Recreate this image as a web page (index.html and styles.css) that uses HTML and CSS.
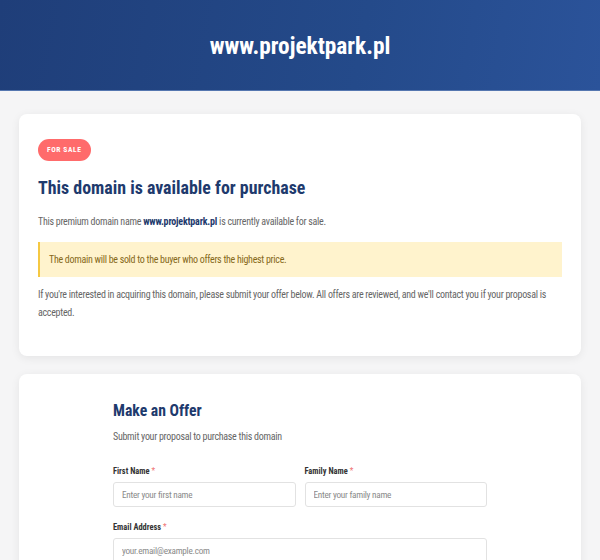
FILE: index.html
```html
<!DOCTYPE html>
<html lang="en">
<head>
<meta charset="utf-8">
<title>www.projektpark.pl - Domain for sale</title>
<link rel="stylesheet" href="styles.css">
</head>
<body>
<header class="site-header">
  <h1 class="site-title">www.projektpark.pl</h1>
</header>

<main class="page">
  <section class="card intro">
    <span class="badge">For Sale</span>
    <h2 class="intro-title">This domain is available for purchase</h2>
    <p class="text lead">This premium domain name <strong>www.projektpark.pl</strong> is currently available for sale.</p>
    <div class="notice">The domain will be sold to the buyer who offers the highest price.</div>
    <p class="text">If you're interested in acquiring this domain, please submit your offer below. All offers are reviewed, and we'll contact you if your proposal is accepted.</p>
  </section>

  <section class="card offer">
    <form class="offer-form">
      <h2 class="offer-title">Make an Offer</h2>
      <p class="text offer-sub">Submit your proposal to purchase this domain</p>

      <div class="row">
        <div class="field">
          <label class="label" for="first">First Name <span class="req">*</span></label>
          <input class="input" id="first" type="text" placeholder="Enter your first name">
        </div>
        <div class="field">
          <label class="label" for="family">Family Name <span class="req">*</span></label>
          <input class="input" id="family" type="text" placeholder="Enter your family name">
        </div>
      </div>

      <div class="field">
        <label class="label" for="email">Email Address <span class="req">*</span></label>
        <input class="input" id="email" type="email" placeholder="your.email@example.com">
      </div>
    </form>
  </section>
</main>
</body>
</html>
```

FILE: styles.css
```css
* {
  box-sizing: border-box;
}

body {
  margin: 0;
  background: #f5f5f6;
  font-family: "Roboto Condensed", Roboto, "Liberation Sans", sans-serif;
  font-stretch: condensed;
  color: #666;
}

/* Top banner */
.site-header {
  height: 91px;
  padding-top: 2px;
  display: flex;
  align-items: center;
  justify-content: center;
  background: linear-gradient(100deg, #1f3e79 0%, #244a8a 60%, #2b539a 100%);
  border-bottom: 1px solid #5577b0;
}

.site-title {
  margin: 0;
  color: #fff;
  font-size: 23.3px;
  font-weight: 700;
  line-height: 28px;
}

/* Content column */
.page {
  display: flex;
  flex-direction: column;
  gap: 18px;
  padding: 23px 19px 40px;
}

.card {
  background: #fff;
  border-radius: 8px;
  box-shadow: 0 2px 10px rgba(0, 0, 0, 0.07);
}

.intro {
  padding: 23px 19px 34px;
}

.badge {
  display: inline-block;
  height: 22px;
  padding: 0 9px;
  border-radius: 11px;
  background: #ff6b6b;
  color: #fff;
  font-size: 7.5px;
  font-weight: 700;
  line-height: 22px;
  letter-spacing: 0.6px;
  text-transform: uppercase;
}

.intro-title {
  margin: 16px 0 0;
  color: #1e3a6d;
  font-size: 17.9px;
  font-weight: 700;
  line-height: 22px;
}

.text {
  margin: 0;
  font-size: 10px;
  line-height: 18px;
  letter-spacing: -0.28px;
  color: #666;
}

.text strong {
  color: #1e3a6d;
  letter-spacing: -0.2px;
}

.lead {
  margin-top: 14px;
}

.notice {
  margin: 11px 0 9px;
  padding: 8.5px 9px;
  background: #fff3cd;
  border-left: 2px solid #f5c842;
  color: #86691a;
  font-size: 10px;
  line-height: 18px;
  letter-spacing: -0.3px;
}

/* Offer form */
.offer {
  padding: 27px 19px 24px;
}

.offer-form {
  width: 374px;
  margin: 0 auto;
}

.offer-title {
  margin: 0;
  color: #1e3a6d;
  font-size: 15.7px;
  font-weight: 700;
  line-height: 20px;
}

.offer-sub {
  margin-top: 7px;
}

.row {
  display: grid;
  grid-template-columns: 1fr 1fr;
  gap: 9px;
  margin-top: 18.5px;
}

.field {
  display: flex;
  flex-direction: column;
  gap: 5px;
}

.row + .field {
  margin-top: 14px;
}

.label {
  color: #333;
  font-size: 8.4px;
  font-weight: 700;
  line-height: 12px;
}

.req {
  color: #ef7474;
  font-weight: 400;
}

.input {
  height: 25.5px;
  padding: 0 8px;
  border: 1px solid #e2e2e2;
  border-radius: 3px;
  background: #fff;
  font-family: inherit;
  font-stretch: inherit;
  font-size: 9.2px;
  letter-spacing: -0.25px;
  color: #333;
  outline: none;
}

.input::placeholder {
  color: #8a8a8a;
}
```
